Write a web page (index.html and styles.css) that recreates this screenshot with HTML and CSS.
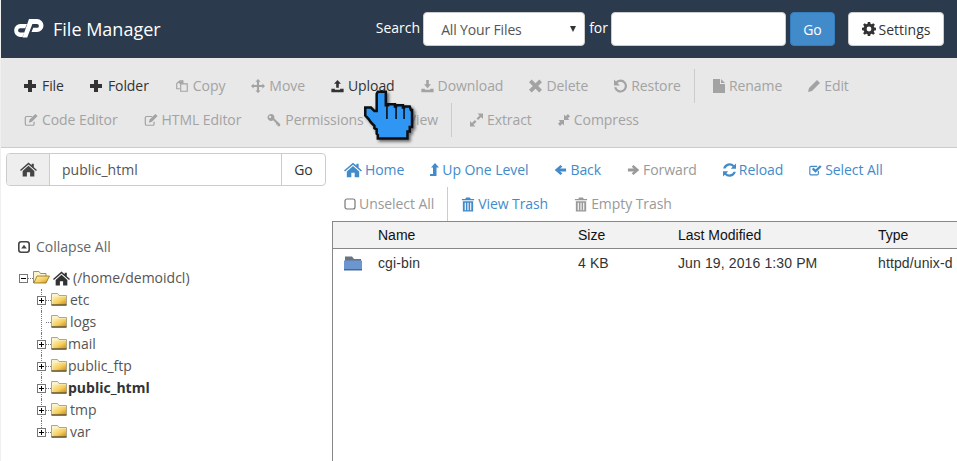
FILE: index.html
```html
<!DOCTYPE html>
<html lang="en">
<head>
<meta charset="utf-8">
<title>File Manager</title>
<link rel="stylesheet" href="styles.css">
</head>
<body>
<svg class="defs" width="0" height="0" aria-hidden="true">
  <defs>
    <symbol id="i-plus" viewBox="1 0 14 14"><path d="M5 1h4v4h4v4H9v4H5V9H1V5h4z"/></symbol>
    <symbol id="i-copy" viewBox="0 0 16 16"><path fill="none" stroke="currentColor" stroke-width="1.3" d="M5.5 5.5V2.2L2 5.2v6h3.5M5.5 2.2H9v3.2M9 5.5H6.5v8.5H14V5.5zM9 2.2l-3.2 3"/></symbol>
    <symbol id="i-move" viewBox="0 0 16 16"><path d="M8 0l3 3H9.2v3.8H13V5l3 3-3 3V9.2H9.2V13H11l-3 3-3-3h1.8V9.2H3V11L0 8l3-3v1.8h3.8V3H5z"/></symbol>
    <symbol id="i-upload" viewBox="1 0 14 16"><path d="M8 1l4 4.500H9.500V10h-3V5.500H4zM1 11h4v1.200h6V11h4v4H1z"/></symbol>
    <symbol id="i-download" viewBox="1 0 14 16"><path d="M6.500 1h3v5H12l-4 4.500L4 6h2.500zM1 11h4v1.200h6V11h4v4H1z"/></symbol>
    <symbol id="i-x" viewBox="1 1 12 12"><path d="M3.500 1L7 4.500 10.500 1 13 3.500 9.500 7l3.500 3.500-2.500 2.500L7 9.500 3.500 13 1 10.500 4.500 7 1 3.500z"/></symbol>
    <symbol id="i-restore" viewBox="1 1 12 12"><path fill="none" stroke="currentColor" stroke-width="2" d="M3 4a5 5 0 1 1-.9 4.200"/><path d="M1 1v5.500h5.500z"/></symbol>
    <symbol id="i-file" viewBox="1 1 12 14"><path d="M1 1h7v5h5v9H1zM9 1l4 4H9z"/></symbol>
    <symbol id="i-pencil" viewBox="1 1 12 12"><path d="M10 1l3 3-8 8-4 1 1-4z"/></symbol>
    <symbol id="i-edit" viewBox="0 0 16 14"><path fill="none" stroke="currentColor" stroke-width="1.400" d="M9.500 3H3a1.500 1.500 0 0 0-1.500 1.500v7A1.500 1.500 0 0 0 3 13h7a1.500 1.500 0 0 0 1.500-1.500V9"/><path d="M13 0l2.500 2.500L9 9 5.500 10 6.500 6.500z"/></symbol>
    <symbol id="i-key" viewBox="0 0 16 16"><path fill-rule="evenodd" d="M4.500 1a4 4 0 0 1 3.800 5.200L15 12.500V15h-3v-1.800h-1.800v-1.800L7 8.200A4 4 0 1 1 4.500 1zM3.500 3.200a1.300 1.300 0 1 0 0 2.600 1.300 1.300 0 0 0 0-2.600z"/></symbol>
    <symbol id="i-eye" viewBox="0 0 16 12"><path fill-rule="evenodd" d="M8 1c3.500 0 6.500 2.500 8 5-1.500 2.500-4.500 5-8 5S1.500 8.500 0 6c1.500-2.500 4.500-5 8-5zM8 3a3 3 0 1 0 0 6 3 3 0 0 0 0-6z"/></symbol>
    <symbol id="i-expand" viewBox="1 1 12 12"><path d="M8 1h5v5l-1.800-1.800L8.500 7 7 5.500l2.800-2.700zM6 13H1V8l1.800 1.800L5.500 7 7 8.500l-2.800 2.700z"/></symbol>
    <symbol id="i-compress" viewBox="1 1 12 12"><path d="M13 3.200L10.800 5.400 12.500 7H7V1.500l1.700 1.700L10.900 1zM1 10.800l2.200-2.200L1.500 7H7v5.500l-1.700-1.700L3.100 13z"/></symbol>
    <symbol id="i-home" viewBox="0 0 16 14"><path d="M8 0.500l3 2.600V1.500h2v3.300l3 2.600-.9 1L8 2.300 0.900 8.400l-.9-1zM8 3.500l5.500 4.800V13.500H9.500V9.500h-3v4H2.500V8.300z"/></symbol>
    <symbol id="i-up" viewBox="1 0 9 14"><path d="M6 0l4 4.500H7.500V13H1v-2h3V4.500H2z"/></symbol>
    <symbol id="i-back" viewBox="0 0 14 14"><path d="M7 1.500l2 2L6.500 5.500H13v3H6.500L9 10.500l-2 2L0.800 7z"/></symbol>
    <symbol id="i-fwd" viewBox="0 0 14 14"><path d="M7 1.500l-2 2 2.500 2H1v3h6.500L5 10.500l2 2L13.200 7z"/></symbol>
    <symbol id="i-reload" viewBox="1 1 12 12"><path d="M13 1v4.800H8.200l1.700-1.700A4 4 0 0 0 3.300 5.500H1.200A6 6 0 0 1 11.400 2.700zM1 13V8.200h4.800l-1.700 1.700a4 4 0 0 0 6.600-1.400h2.100A6 6 0 0 1 2.600 11.300z"/></symbol>
    <symbol id="i-check" viewBox="0 0 16 14"><path fill="none" stroke="currentColor" stroke-width="1.400" d="M11.500 8v3.500A1.500 1.500 0 0 1 10 13H2.500A1.500 1.500 0 0 1 1 11.500V4A1.500 1.500 0 0 1 2.500 2.500H10"/><path d="M3.500 6l2-2 2.500 2.500L13.500 1l2 2L8 10.500z"/></symbol>
    <symbol id="i-box" viewBox="0 0 12 12"><rect x="1" y="1" width="10" height="10" rx="2" fill="none" stroke="currentColor" stroke-width="1.200"/></symbol>
    <symbol id="i-trash" viewBox="0 0 14 16"><path d="M5 0.500h4l1 1.500h3.500v1.500H.5V2H4zM1.500 4.500h11V15.500h-11zM3.500 6v8h1.200V6zM6.400 6v8h1.200V6zM9.300 6v8h1.200V6z" fill-rule="evenodd"/></symbol>
    <symbol id="i-gear" viewBox="0 0 14 14"><path fill-rule="evenodd" d="M5.800 0h2.400l.3 1.800 1.200.5L11.300 1.200l1.600 1.600-1.100 1.500.5 1.200 1.700.3v2.400l-1.700.3-.5 1.200 1.100 1.500-1.600 1.600-1.600-1.100-1.200.5-.3 1.800H5.800l-.3-1.800-1.200-.5-1.600 1.100L1.100 11.200l1.100-1.500-.5-1.200L0 8.200V5.800l1.700-.3.500-1.200-1.100-1.500L2.700 1.200l1.600 1.100 1.200-.5zM7 4.600a2.400 2.400 0 1 0 0 4.800 2.400 2.400 0 0 0 0-4.800z"/></symbol>
    <symbol id="i-collapse" viewBox="0 0 12 12"><rect x="0.800" y="0.800" width="10.400" height="10.400" rx="2.500" fill="none" stroke="currentColor" stroke-width="1.600"/><path d="M6 3.800l2.800 3.800H3.200z"/></symbol>
    <linearGradient id="fold" x1="0" y1="0" x2="1" y2="1">
      <stop offset="0" stop-color="#fff3b8"/><stop offset=".55" stop-color="#f6cf5e"/><stop offset="1" stop-color="#c98f1c"/>
    </linearGradient>
    <symbol id="i-folder" viewBox="0 0 16 14">
      <path d="M0.500 1.500h6l1.500 2h7.500v9.500H.5z" fill="#fbf3d0" stroke="#b0a68c"/>
      <path d="M1.500 4.500h13.500v8H1.500z" fill="url(#fold)"/>
      <path d="M.5 13h15" stroke="#4b3a12" stroke-width="1.200"/>
    </symbol>
    <symbol id="i-open" viewBox="0 0 17 14">
      <path d="M.5 13V1.500h5.500l1.500 2H13V6" fill="#fbf3d0" stroke="#9d8f66"/>
      <path d="M.8 13L4 6h12.500L13 13z" fill="url(#fold)" stroke="#8c6d1f" stroke-width=".8"/>
    </symbol>
    <symbol id="i-blue" viewBox="0 0 18 16">
      <path d="M1 1.500h7l2 2.500h7v3H1z" fill="#6b7380"/>
      <path d="M0 5.500h18v9.500H0z" fill="#6a97d0"/>
      <path d="M0 14h18v1.500H0z" fill="#47699a"/>
    </symbol>
  </defs>
</svg>

<header class="topbar">
  <div class="brand">
    <svg class="logo" viewBox="2 0 32 22" aria-hidden="true"><path fill="#fff" d="M15 7H8.500A6 6 0 0 0 2.200 13 6.500 6.500 0 0 0 8 20H10.500L12.500 15.500H8.200a1.700 1.700 0 0 1 0-4.200H13.200z"/><path fill="#fff" d="M10.500 20.500H15.200L20.400 7H25a1.800 1.800 0 0 1 0 3.800H21.200l-1.700 4.200H25a6.500 6.500 0 0 0 6.500-6.500A6.500 6.500 0 0 0 25 2H17z"/></svg>
    <span class="title">File Manager</span>
  </div>
  <form class="search">
    <label class="search-label" for="scope">Search</label>
    <div class="select-wrap">
      <select id="scope" class="select"><option>All Your Files</option></select>
      <span class="caret"></span>
    </div>
    <label class="search-label" for="query">for</label>
    <input id="query" class="query" type="text">
    <button class="go" type="button">Go</button>
    <button class="settings" type="button"><svg class="ic"><use href="#i-gear"/></svg>Settings</button>
  </form>
</header>

<section class="toolbar">
  <div class="tool-row">
    <a class="tool on"><svg class="ic"><use href="#i-plus"/></svg>File</a>
    <a class="tool on"><svg class="ic"><use href="#i-plus"/></svg>Folder</a>
    <a class="tool"><svg class="ic"><use href="#i-copy"/></svg>Copy</a>
    <a class="tool"><svg class="ic"><use href="#i-move"/></svg>Move</a>
    <a class="tool on"><svg class="ic w13"><use href="#i-upload"/></svg>Upload</a>
    <a class="tool"><svg class="ic w13"><use href="#i-download"/></svg>Download</a>
    <a class="tool"><svg class="ic w13"><use href="#i-x"/></svg>Delete</a>
    <a class="tool"><svg class="ic w13"><use href="#i-restore"/></svg>Restore</a>
    <span class="sep"></span>
    <a class="tool"><svg class="ic w12"><use href="#i-file"/></svg>Rename</a>
    <a class="tool"><svg class="ic w12"><use href="#i-pencil"/></svg>Edit</a>
  </div>
  <div class="tool-row">
    <a class="tool"><svg class="ic"><use href="#i-edit"/></svg>Code Editor</a>
    <a class="tool"><svg class="ic"><use href="#i-edit"/></svg>HTML Editor</a>
    <a class="tool"><svg class="ic"><use href="#i-key"/></svg>Permissions</a>
    <a class="tool"><svg class="ic"><use href="#i-eye"/></svg>View</a>
    <span class="sep"></span>
    <a class="tool"><svg class="ic w13"><use href="#i-expand"/></svg>Extract</a>
    <a class="tool"><svg class="ic w12"><use href="#i-compress"/></svg>Compress</a>
  </div>
  <svg class="hand" viewBox="0 0 50 54" aria-hidden="true">
    <path d="M13 3H20V15H22V14H28V16H29V15H35V17H36V16H41L42 19H43V34H41V38H39V44H13V41L12 40V36L10 35V33L7 30L5 27L2 24V17H7L10 20H12V5Z" fill="#2f97f3" stroke="#0b0f14" stroke-width="2.200"/>
    <path d="M21 15V27M29 16V27M36 17V27" stroke="#0b0f14" stroke-width="1.400" fill="none"/>
  </svg>
</section>

<main class="main">
  <aside class="side">
    <div class="path">
      <span class="path-home"><svg class="ic"><use href="#i-home"/></svg></span>
      <span class="path-input">public_html</span>
      <span class="path-go">Go</span>
    </div>
    <div class="collapse"><svg class="ic"><use href="#i-collapse"/></svg>Collapse All</div>
    <ul class="tree">
      <li class="node root">
        <span class="exp minus"></span><span class="dots"></span>
        <svg class="folder open"><use href="#i-open"/></svg>
        <svg class="ic rootic"><use href="#i-home"/></svg>
        <span>(/home/demoidcl)</span>
      </li>
      <li class="node child"><span class="exp"></span><span class="dots"></span><svg class="folder"><use href="#i-folder"/></svg><span class="wide">etc</span></li>
      <li class="node child"><span class="noexp"></span><span class="dots"></span><svg class="folder"><use href="#i-folder"/></svg><span class="wide">logs</span></li>
      <li class="node child"><span class="exp"></span><span class="dots"></span><svg class="folder"><use href="#i-folder"/></svg><span>mail</span></li>
      <li class="node child"><span class="exp"></span><span class="dots"></span><svg class="folder"><use href="#i-folder"/></svg><span>public_ftp</span></li>
      <li class="node child"><span class="exp"></span><span class="dots"></span><svg class="folder"><use href="#i-folder"/></svg><b>public_html</b></li>
      <li class="node child"><span class="exp"></span><span class="dots"></span><svg class="folder"><use href="#i-folder"/></svg><span class="wide">tmp</span></li>
      <li class="node child last"><span class="exp"></span><span class="dots"></span><svg class="folder"><use href="#i-folder"/></svg><span class="wide">var</span></li>
    </ul>
  </aside>
  <div class="content">
    <nav class="nav">
      <div class="nav-row">
        <a class="link"><svg class="ic i-home"><use href="#i-home"/></svg>Home</a>
        <a class="link"><svg class="ic i-up"><use href="#i-up"/></svg>Up One Level</a>
        <a class="link"><svg class="ic"><use href="#i-back"/></svg>Back</a>
        <a class="link off"><svg class="ic"><use href="#i-fwd"/></svg>Forward</a>
        <a class="link"><svg class="ic"><use href="#i-reload"/></svg>Reload</a>
        <a class="link"><svg class="ic"><use href="#i-check"/></svg>Select All</a>
      </div>
      <div class="nav-row">
        <a class="link off"><svg class="ic i-box"><use href="#i-box"/></svg>Unselect All</a>
        <span class="sep"></span>
        <a class="link"><svg class="ic i-trash"><use href="#i-trash"/></svg>View Trash</a>
        <a class="link off"><svg class="ic i-trash"><use href="#i-trash"/></svg>Empty Trash</a>
      </div>
    </nav>
    <div class="table-box">
      <table class="files">
        <thead><tr><th class="c-icon"></th><th class="c-name">Name</th><th class="c-size">Size</th><th class="c-date">Last Modified</th><th class="c-type">Type</th></tr></thead>
        <tbody><tr>
          <td class="c-icon"><svg class="blue"><use href="#i-blue"/></svg></td>
          <td>cgi-bin</td><td>4 KB</td><td>Jun 19, 2016 1:30 PM</td><td>httpd/unix-d</td>
        </tr></tbody>
      </table>
    </div>
  </div>
</main>
</body>
</html>
```

FILE: styles.css
```css
* { box-sizing: border-box; }
html, body { margin: 0; height: 100%; overflow: hidden; }
body {
  width: 957px; height: 461px; background: #fff; color: #333;
  font: 14px/20px "Open Sans", sans-serif;
  border-left: 1px solid #f0f0f0;
}
.defs { position: absolute; }
.ic { width: 14px; height: 14px; fill: currentColor; flex: none; }
.w13 { width: 13px; }
.w12 { width: 12px; }

/* top bar */
.topbar {
  height: 58px; background: #2b3a4c; color: #fff;
  display: flex; align-items: center; justify-content: space-between;
  padding: 0 13px 0 13px;
}
.brand { display: flex; align-items: center; gap: 7px; }
.logo { width: 32px; height: 22px; margin-top: -2px; }
.title { font-size: 18px; line-height: 24px; }
.search { display: flex; align-items: center; height: 34px; }
.search-label { margin-right: 3px; margin-top: -2px; }
.select-wrap { position: relative; margin-right: 4px; }
.select {
  display: block; width: 162px; height: 34px; padding: 0 0 0 17px;
  appearance: none; background: #fff; border: 1px solid #ccc; border-radius: 4px;
  font: 14px "Open Sans", sans-serif; color: #555; letter-spacing: -.15px;
}
.caret {
  position: absolute; right: 9px; top: 14px; width: 0; height: 0;
  border-left: 3px solid transparent; border-right: 3px solid transparent; border-top: 6px solid #333;
}
.query {
  width: 175px; height: 34px; margin-right: 4px; background: #fff;
  border: 1px solid #ccc; border-radius: 4px;
}
.go {
  width: 45px; height: 34px; margin-right: 13px; padding: 0;
  background: #428bca; border: 1px solid #357ebd; border-radius: 4px;
  color: #fff; font: 14px "Open Sans", sans-serif;
}
.settings {
  display: flex; align-items: center; justify-content: center; gap: 3px;
  width: 96px; height: 34px; padding: 0; background: #fff;
  border: 1px solid #ccc; border-radius: 4px; color: #333; font: 14px "Open Sans", sans-serif;
}

/* toolbar */
.toolbar {
  position: relative; height: 90px; padding: 11px 0 10px 11px;
  background: #e8e8e8; border-bottom: 1px solid #ccc;
}
.tool-row { display: flex; height: 34px; gap: 2px; }
.tool {
  display: flex; align-items: center; gap: 4px; padding: 0 12px;
  color: #a3a3a3; white-space: nowrap; letter-spacing: -.07px;
}
.tool.on { color: #333; }
.sep { width: 1px; background: #ccc; margin: 0 4px 0 -1px; flex: none; }
.hand {
  position: absolute; left: 362px; top: 30px; width: 57px; height: 62px;
  filter: drop-shadow(2px 2px 1.500px rgba(0,0,0,.55));
}

/* main */
.main { display: flex; height: 313px; }
.side { width: 331px; flex: none; padding: 5px 0 0 5px; }
.path {
  display: flex; width: 320px; height: 33px; color: #555;
  border: 1px solid #ccc; border-radius: 4px; overflow: hidden; line-height: 31px;
}
.path-home {
  width: 43px; flex: none; display: flex; align-items: center; justify-content: center;
  background: #eee; border-right: 1px solid #ccc; color: #444;
}
.path-home .ic { width: 17px; height: 15px; }
.path-input { flex: 1; padding-left: 12px; }
.path-go { width: 44px; flex: none; text-align: center; border-left: 1px solid #ccc; color: #333; }
.collapse {
  display: flex; align-items: center; gap: 6px; margin: 51px 0 0 12px; color: #666;
}
.collapse .ic { width: 12px; height: 12px; color: #444; }
.tree { list-style: none; margin: 10px 0 0; padding: 0; color: #555; position: relative; }
.node { display: flex; align-items: center; height: 22px; position: relative; }
.node b { color: #333; }
.root { padding-left: 13px; color: #555; }
.child { padding-left: 31px; }
.child::before {
  content: ""; position: absolute; left: 35px; top: 0; bottom: 0;
  border-left: 1px dotted #777;
}
.child.last::before { bottom: 11px; }
.exp, .noexp { width: 9px; height: 9px; flex: none; position: relative; z-index: 1; }
.exp { border: 1px solid #777; background:
  linear-gradient(#000,#000) center/5px 1px no-repeat,
  linear-gradient(#000,#000) center/1px 5px no-repeat, #fff; }
.exp.minus { background: linear-gradient(#000,#000) center/5px 1px no-repeat, #fff; }
.dots { width: 5px; border-top: 1px dotted #777; flex: none; }
.noexp { visibility: hidden; }
.folder { width: 16px; height: 14px; flex: none; margin: -2px 1px 0 0; }
.folder.open { width: 17px; margin-right: 3px; }
.rootic { width: 17px; height: 15px; margin-right: 3px; color: #333; }
.wide { margin-left: 2px; }

/* right */
.content { flex: 1; min-width: 0; display: flex; flex-direction: column; padding-top: 5px; }
.nav { height: 68px; }
.nav-row { display: flex; height: 34px; gap: 2px; }
.link {
  display: flex; align-items: center; gap: 3px; padding: 0 12px;
  color: #428bca; white-space: nowrap; letter-spacing: -.07px;
}
.link.off { color: #999; }
.link .ic { width: 13px; }
.link .i-home { width: 18px; height: 16px; }
.link .i-up { width: 9px; }
.link .i-box { width: 12px; height: 12px; color: #777; }
.link .i-trash { width: 14px; height: 15px; }
.nav .sep { margin: 0 -1px 0 -1px; }
.table-box {
  flex: 1; overflow: hidden; border-left: 1px solid #888; border-top: 1px solid #888;
}
.files {
  border-collapse: collapse; table-layout: fixed; width: 760px;
  font: 14px/20px "Liberation Sans", Arial, sans-serif; color: #222;
}
.files th {
  height: 26px; padding: 0; text-align: left; font-weight: 400; background: #f2f2f2;
  border-bottom: 1px solid #888; color: #111;
}
.files td { height: 29px; padding: 0; color: #333; letter-spacing: .12px; }
.c-icon { width: 45px; }
.c-name { width: 200px; }
.c-size { width: 100px; }
.c-date { width: 200px; }
.c-type { width: 215px; }
.blue { display: block; width: 18px; height: 16px; margin: 0 0 0 11px; }
```
